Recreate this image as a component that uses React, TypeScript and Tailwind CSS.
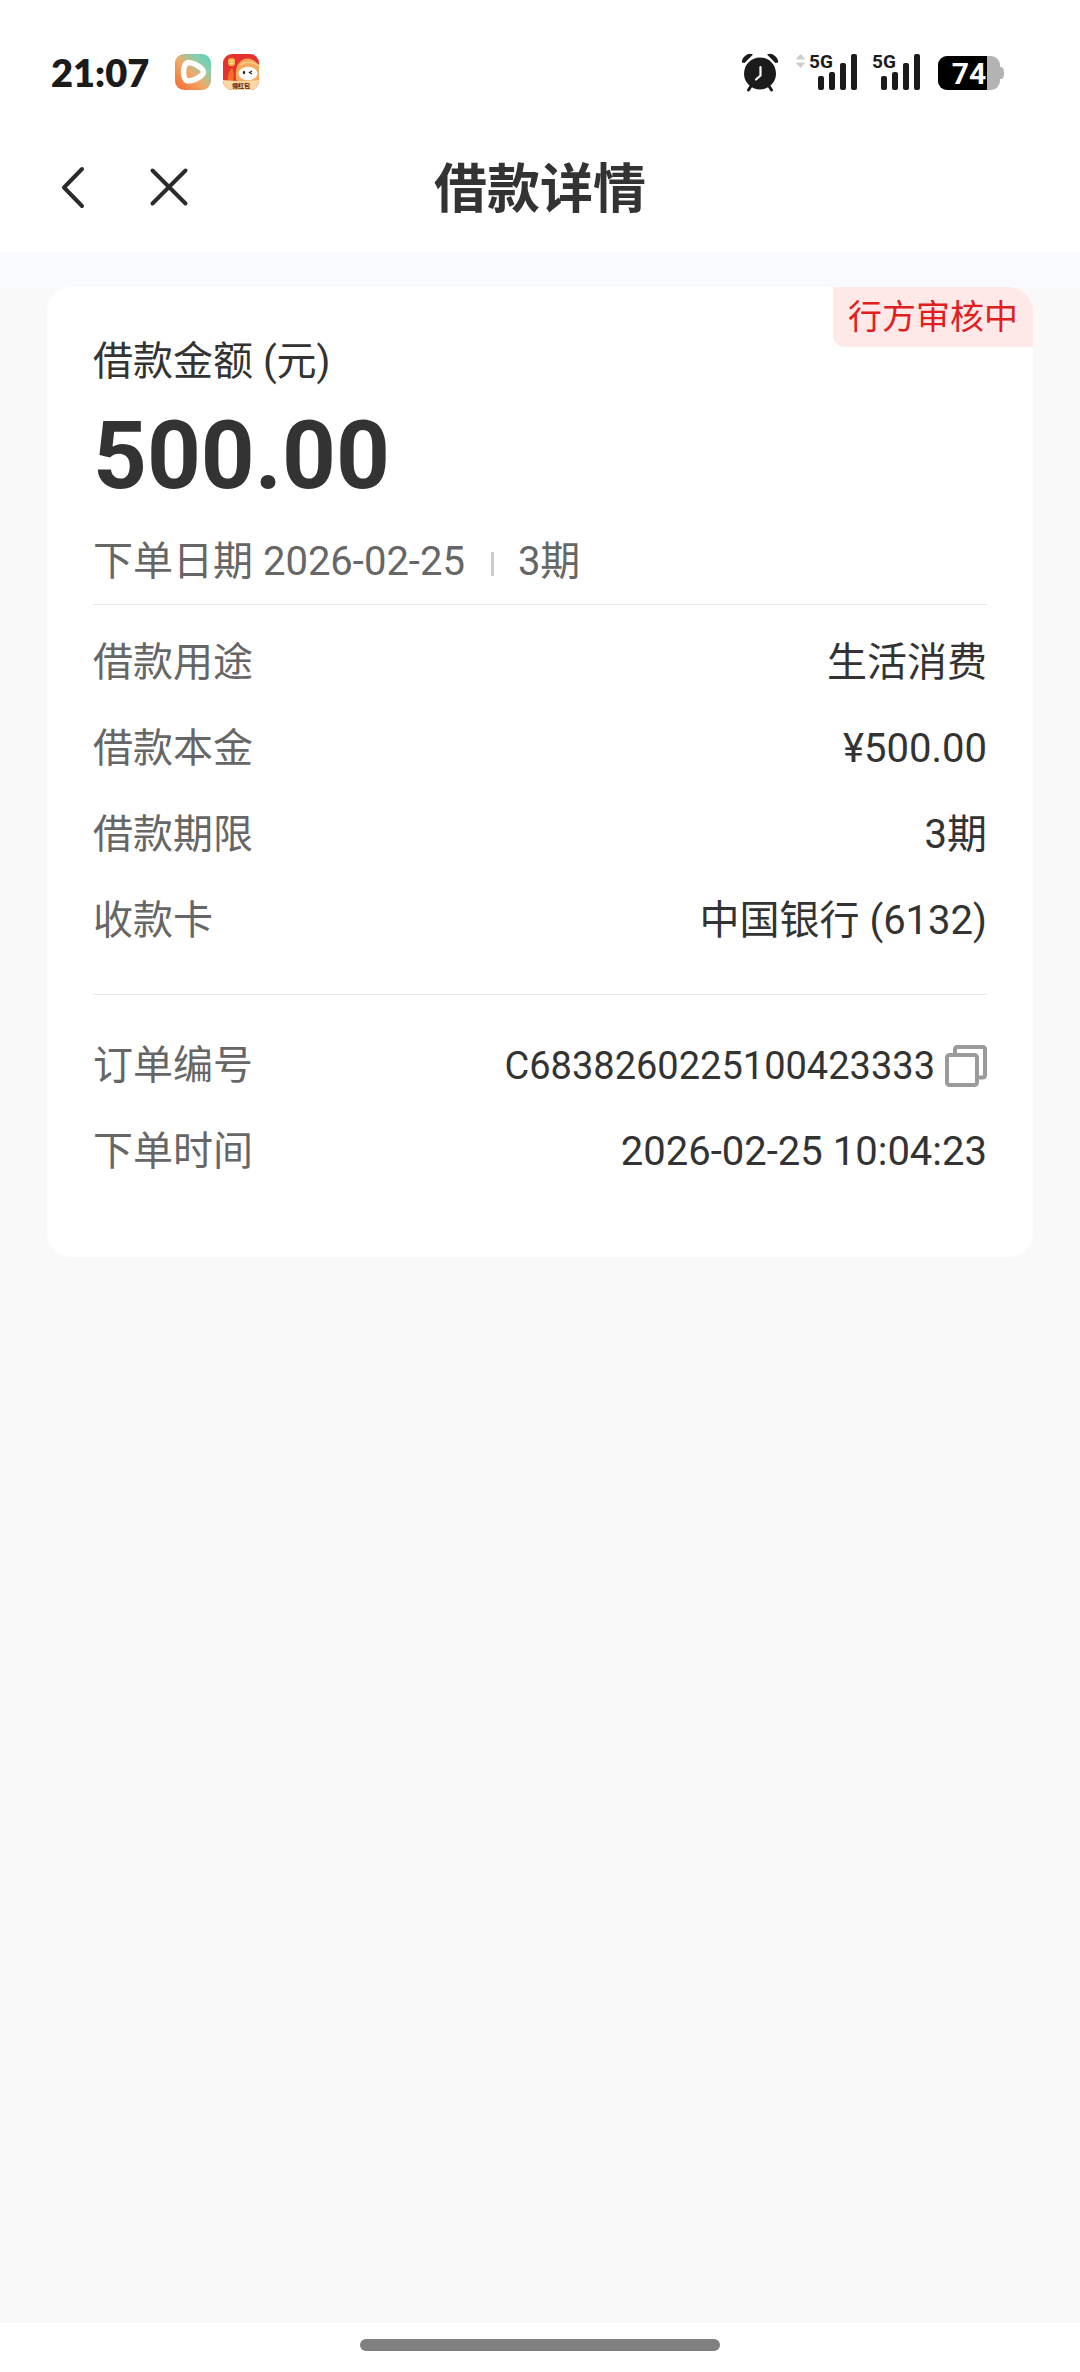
import React from "react";

function VideoAppIcon() {
  return (
    <svg viewBox="0 0 36 36" className="size-9" aria-hidden="true">
      <defs>
        <linearGradient id="video-bg" x1="0" y1="1" x2="1" y2="0">
          <stop offset="0.1" stopColor="#f4763a" />
          <stop offset="0.45" stopColor="#f0a868" />
          <stop offset="0.75" stopColor="#86cfae" />
          <stop offset="1" stopColor="#53d3b4" />
        </linearGradient>
      </defs>
      <rect width="36" height="36" rx="9" fill="url(#video-bg)" />
      <path
        d="M13.500 8.500Q9 9 8.500 18Q9 27 13.500 27Q20 26.500 26.500 21.500Q30.500 18 26.500 14.500Q20 9 13.500 8.500Z"
        fill="none"
        stroke="#fff"
        strokeWidth="5.500"
        strokeLinejoin="round"
      />
    </svg>
  );
}

function RedPacketAppIcon() {
  return (
    <svg viewBox="0 0 36 36" className="size-9" aria-hidden="true">
      <defs>
        <clipPath id="packet-clip">
          <rect width="36" height="36" rx="9" />
        </clipPath>
      </defs>
      <g clipPath="url(#packet-clip)">
        <rect width="36" height="36" fill="#e5322c" />
        <rect x="5" y="4" width="7" height="8" rx="3" fill="#f9b64a" />
        <path d="M7 7h3M7 9.500h3" stroke="#fff0b0" strokeWidth="1" />
        <path d="M5 27q-1-9 4-13q3 4 1 13z" fill="#f3702c" />
        <path d="M13 26q-1-13 3-17q6-7 14-3q4 2 6 6v15H15z" fill="#f5a95a" />
        <path d="M17 11q8-6 19 1" stroke="#fbd08a" strokeWidth="1.500" fill="none" />
        <ellipse cx="25" cy="19.500" rx="9.500" ry="6.800" fill="#fff" />
        <ellipse cx="21" cy="18.500" rx="1.200" ry="1.700" fill="#2b2020" />
        <path d="M29 17l-2.500 1.500 2.500 1.500" stroke="#2b2020" strokeWidth="1.200" fill="none" />
        <path d="M0 26q18 2 36 0v10H0z" fill="#fbd7a4" />
      </g>
      <text x="18" y="34" textAnchor="middle" fontSize="6" fontWeight="900" fill="#6b2a14" fontFamily="Noto Sans CJK SC, sans-serif">
        领红包
      </text>
    </svg>
  );
}

function AlarmIcon() {
  return (
    <svg viewBox="0 0 38 39" className="h-[39px] w-[38px]" aria-hidden="true">
      <path d="M1 9.500Q0 6 4 3Q8-.500 12 1.500L3.500 10Z" fill="#1b1b1b" />
      <path d="M37 9.500Q38 6 34 3Q30-.500 26 1.500L34.500 10Z" fill="#1b1b1b" />
      <path d="M10 33L7.500 37M28 33l2.500 4" stroke="#1b1b1b" strokeWidth="3" strokeLinecap="round" />
      <circle cx="19" cy="20.500" r="16" fill="#1b1b1b" />
      <path d="M19.500 14v8.500l-4.500 4" fill="none" stroke="#fff" strokeWidth="2.200" strokeLinecap="round" />
    </svg>
  );
}

function SignalIcon({ arrows }: { arrows?: boolean }) {
  return (
    <svg viewBox="0 -8 63 54" className="h-[54px] w-[63px]" role="img" aria-label="5G">
      {arrows && (
        <g fill="#cfcfcf" stroke="#cfcfcf" strokeLinejoin="round">
          <path d="M1.500 6L5.500 1.500L9.500 6z" />
          <path d="M1.500 10L5.500 14.500L9.500 10z" />
        </g>
      )}
      <text x="14" y="15" fontSize="19" fontWeight="700" fill="#1b1b1b" fontFamily="Roboto, sans-serif">
        5G
      </text>
      <g fill="#1b1b1b">
        <rect x="23" y="23" width="6" height="14" rx="2" />
        <rect x="34" y="19" width="6" height="18" rx="2" />
        <rect x="45" y="10" width="6" height="27" rx="2" />
        <rect x="56" y="1" width="6" height="36" rx="2" />
      </g>
    </svg>
  );
}

function BatteryIcon() {
  return (
    <svg viewBox="0 0 66 34" className="h-[34px] w-[66px]" role="img" aria-label="74">
      <defs>
        <clipPath id="battery-clip">
          <rect width="62" height="34" rx="9" />
        </clipPath>
      </defs>
      <path d="M60 11h3q3 0 3 6t-3 6h-3z" fill="#b3b3b3" />
      <g clipPath="url(#battery-clip)">
        <rect width="62" height="34" fill="#b3b3b3" />
        <rect width="49" height="34" fill="#000" />
      </g>
      <text x="31" y="28" textAnchor="middle" fontSize="30" fontWeight="700" fill="#fff" fontFamily="Roboto, sans-serif">
        74
      </text>
    </svg>
  );
}

function CopyIcon() {
  return (
    <svg viewBox="0 0 42 42" className="h-[42px] w-[42px]" fill="none" stroke="#9b9b9b" strokeWidth="4" strokeLinejoin="round" aria-hidden="true">
      <path d="M10 9V4.500Q10 2 12.500 2H37.500Q40 2 40 4.500V30Q40 32.500 37.500 32.500H33" />
      <rect x="2" y="10" width="30" height="30" rx="2.500" />
    </svg>
  );
}

function Row({ label, children }: { label: string; children: React.ReactNode }) {
  return (
    <div className="flex h-[86px] items-center justify-between">
      <dt className="text-[#666666]">{label}</dt>
      <dd className="flex items-center">{children}</dd>
    </div>
  );
}

export default function App() {
  return (
    <div className="flex min-h-screen flex-col bg-[#f9f9f9] font-['Roboto','Noto_Sans_CJK_SC',sans-serif] text-[#333333]">
      <div className="flex h-36 items-center justify-between bg-white pl-[51px] pr-[76px]">
        <div className="flex items-center">
          <span className="w-[124px] font-['Lato',sans-serif] text-[38px] font-extrabold leading-[48px] text-[#1b1b1b]">21:07</span>
          <div className="flex gap-3">
            <VideoAppIcon />
            <RedPacketAppIcon />
          </div>
        </div>
        <div className="flex items-center">
          <AlarmIcon />
          <div className="ml-4">
            <SignalIcon arrows />
          </div>
          <SignalIcon />
          <div className="ml-[17px] mt-[2px]">
            <BatteryIcon />
          </div>
        </div>
      </div>

      <header className="grid h-[108px] grid-cols-[1fr_auto_1fr] items-start bg-white px-[51px]">
        <nav className="flex gap-10">
          <button type="button" aria-label="返回" className="flex h-[86px] w-11 items-center justify-center">
            <svg viewBox="0 0 24 44" className="h-11 w-6" fill="none" stroke="#2b2b2b" strokeWidth="4" strokeLinecap="round" strokeLinejoin="round">
              <path d="M21 4L3 22.500L21 41" />
            </svg>
          </button>
          <button type="button" aria-label="关闭" className="flex h-[86px] w-[68px] items-center justify-center">
            <svg viewBox="0 0 40 40" className="size-10" fill="none" stroke="#2b2b2b" strokeWidth="4" strokeLinecap="round">
              <path d="M3.500 3.500L36.500 36.500M36.500 3.500L3.500 36.500" />
            </svg>
          </button>
        </nav>
        <h1 className="text-[53px] font-bold leading-[92px]">借款详情</h1>
      </header>

      <div className="h-[35px] bg-[#f9faff]" />

      <main className="grow bg-[linear-gradient(#f9faff_1px,#f9f9f9_1px)] px-[47px]">
        <section className="relative overflow-hidden rounded-[24px] bg-white px-[46px] pb-[62px] pt-[47px] text-[40px] leading-[56px]">
          <span className="absolute right-0 top-0 rounded-bl-[12px] bg-[#fee8e8] px-[15px] text-[34px] leading-[60px] text-[#e02020]">
            行方审核中
          </span>
          <h2>借款金额 (元)</h2>
          <p className="mt-4 text-[94px] font-bold leading-[100px]">500.00</p>
          <p className="mt-7 flex items-center text-[#666666]">
            下单日期 2026-02-25
            <span className="ml-[26px] mr-6 mt-1 h-6 w-[3px] bg-[#cccccc]" />
            3期
          </p>
          <hr className="mt-[14px] border-[#e8e8e8]" />
          <dl className="pt-[15px]">
            <Row label="借款用途">生活消费</Row>
            <Row label="借款本金">¥500.00</Row>
            <Row label="借款期限">3期</Row>
            <Row label="收款卡">中国银行 (6132)</Row>
          </dl>
          <hr className="mt-[30px] border-[#e8e8e8]" />
          <dl className="pt-7">
            <Row label="订单编号">
              <span className="text-[38px]">C6838260225100423333</span>
              <button type="button" aria-label="复制" className="ml-[10px]">
                <CopyIcon />
              </button>
            </Row>
            <Row label="下单时间">2026-02-25 10:04:23</Row>
          </dl>
        </section>
      </main>

      <footer className="flex h-[49px] justify-center bg-white pt-4">
        <div className="h-3 w-1/3 rounded-full bg-[#808080]" />
      </footer>
    </div>
  );
}
